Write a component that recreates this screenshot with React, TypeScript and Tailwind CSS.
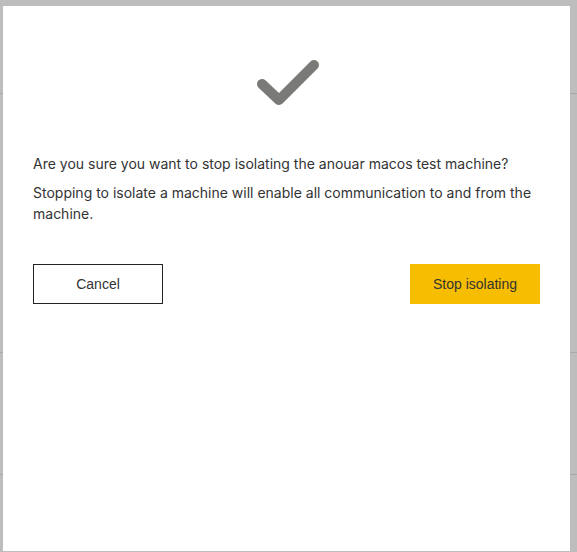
import { useState } from "react";

const BgRows = () => (
  <div className="absolute inset-0 flex flex-col">
    <div className="h-[94px] border-b border-[#a9a9a9]" />
    <div className="h-[259px] border-b border-[#a9a9a9]" />
    <div className="h-[122px] border-b border-[#a9a9a9]" />
    <div className="flex-1" />
  </div>
);

export default function App() {
  const [open, setOpen] = useState(true);

  return (
    <div
      className="relative h-[552px] w-full overflow-hidden bg-[#bdbdbd]"
      style={{ fontFamily: "Inter, 'Noto Sans', sans-serif" }}
    >
      <BgRows />
      {open && (
        <div className="absolute left-[3px] top-[6px] h-[545px] w-[567px] bg-white px-[30px] pt-[51px]">
          <svg
            className="mx-auto block"
            width="64"
            height="52"
            viewBox="0 0 64 52"
            fill="none"
          >
            <path
              d="M7 27 L24 43 L59 8"
              stroke="#7a7a77"
              strokeWidth="10"
              strokeLinecap="round"
              strokeLinejoin="round"
            />
          </svg>

          <div className="mt-[44px] text-[14px] leading-[21px] text-[#333]">
            <p>Are you sure you want to stop isolating the anouar macos test machine?</p>
            <p className="mt-[8px]">
              Stopping to isolate a machine will enable all communication to and from the machine.
            </p>
          </div>

          <div
            className="mt-[40px] flex items-center justify-between"
            style={{ fontFamily: "'Liberation Sans', Arial, sans-serif" }}
          >
            <button
              onClick={() => setOpen(false)}
              className="h-[40px] w-[130px] border border-[#222] bg-white text-[14px] text-[#333]"
            >
              Cancel
            </button>
            <button
              onClick={() => setOpen(false)}
              className="h-[40px] w-[130px] bg-[#f7bd00] text-[14px] text-[#333]"
            >
              Stop isolating
            </button>
          </div>
        </div>
      )}
    </div>
  );
}
